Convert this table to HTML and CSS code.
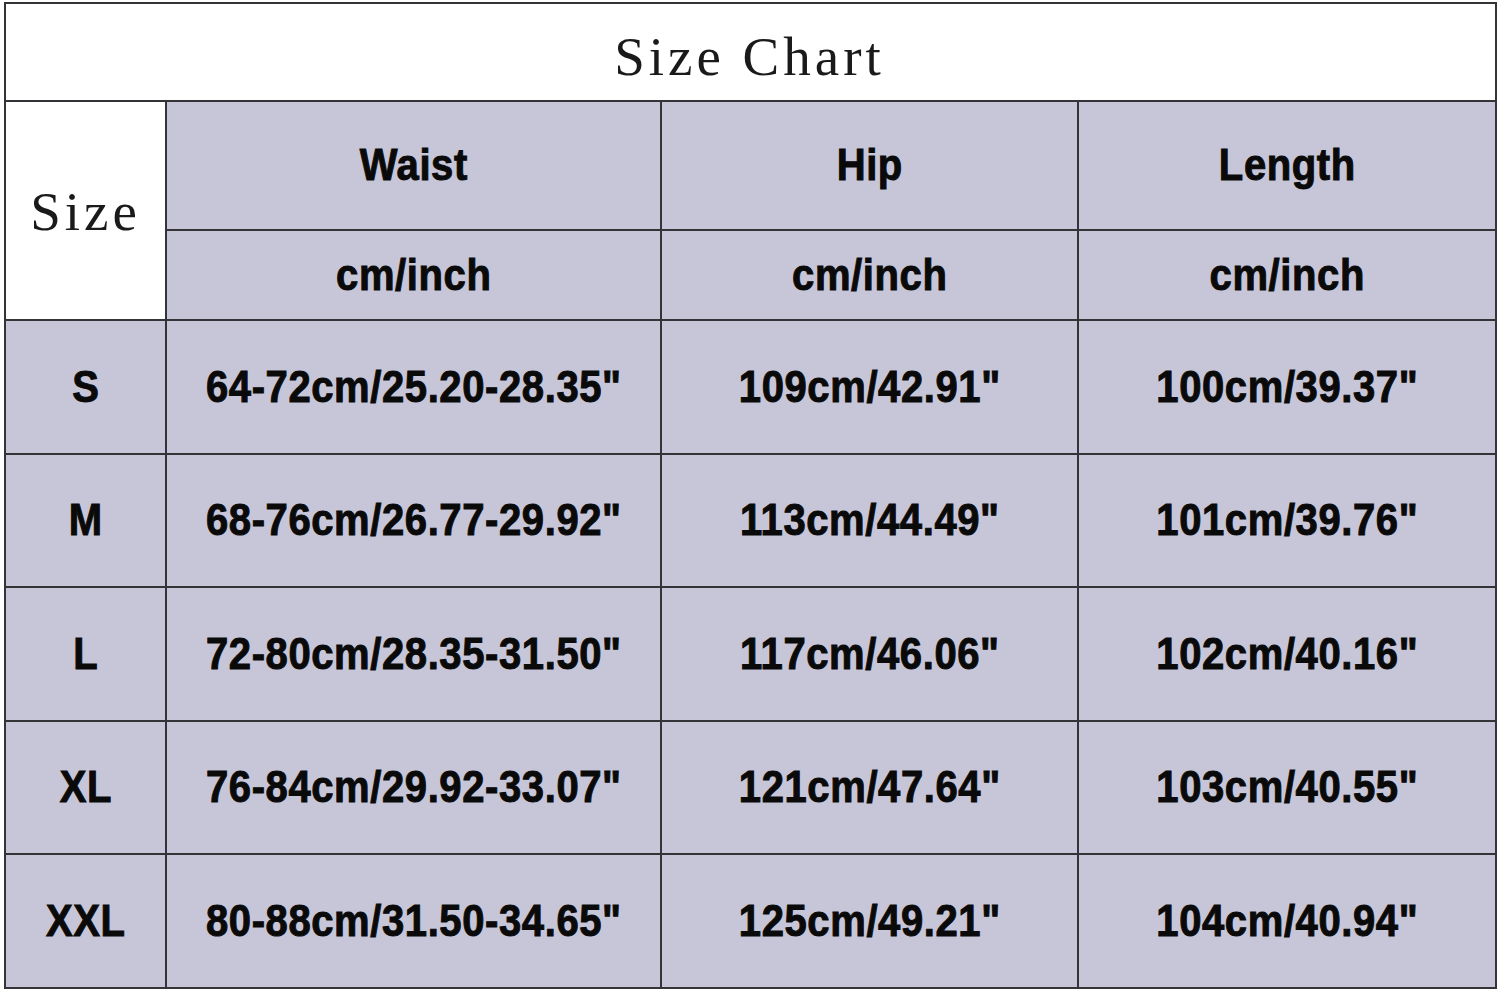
FILE: index.html
```html
<!DOCTYPE html>
<html>
<head>
<meta charset="utf-8">
<link rel="stylesheet" href="styles.css">
</head>
<body>
<div class="chart">
  <div class="cell title span4"><span class="serif">Size Chart</span></div>
  <div class="cell sizehead"><span class="serif">Size</span></div>
  <div class="cell lav"><span class="b">Waist</span></div>
  <div class="cell lav"><span class="b">Hip</span></div>
  <div class="cell lav"><span class="b">Length</span></div>
  <div class="cell lav"><span class="b">cm/inch</span></div>
  <div class="cell lav"><span class="b">cm/inch</span></div>
  <div class="cell lav"><span class="b">cm/inch</span></div>

  <div class="cell lav"><span class="b">S</span></div>
  <div class="cell lav"><span class="b">64-72cm/25.20-28.35"</span></div>
  <div class="cell lav"><span class="b">109cm/42.91"</span></div>
  <div class="cell lav"><span class="b">100cm/39.37"</span></div>

  <div class="cell lav"><span class="b">M</span></div>
  <div class="cell lav"><span class="b">68-76cm/26.77-29.92"</span></div>
  <div class="cell lav"><span class="b">113cm/44.49"</span></div>
  <div class="cell lav"><span class="b">101cm/39.76"</span></div>

  <div class="cell lav"><span class="b">L</span></div>
  <div class="cell lav"><span class="b">72-80cm/28.35-31.50"</span></div>
  <div class="cell lav"><span class="b">117cm/46.06"</span></div>
  <div class="cell lav"><span class="b">102cm/40.16"</span></div>

  <div class="cell lav"><span class="b">XL</span></div>
  <div class="cell lav"><span class="b">76-84cm/29.92-33.07"</span></div>
  <div class="cell lav"><span class="b">121cm/47.64"</span></div>
  <div class="cell lav"><span class="b">103cm/40.55"</span></div>

  <div class="cell lav"><span class="b">XXL</span></div>
  <div class="cell lav"><span class="b">80-88cm/31.50-34.65"</span></div>
  <div class="cell lav"><span class="b">125cm/49.21"</span></div>
  <div class="cell lav"><span class="b">104cm/40.94"</span></div>
</div>
</body>
</html>
```
FILE: styles.css
```css
html, body {
  margin: 0;
  padding: 0;
  background: #ffffff;
}
body {
  padding: 2px 0 0 4px;
}
.chart {
  display: grid;
  width: 1493px;
  box-sizing: border-box;
  padding: 2px;
  gap: 2px;
  background: #333338;
  grid-template-columns: 159px 493px 415px 416px;
  grid-template-rows: 96px 127px 88px 132px 131px 132px 131px 132px;
}
.cell {
  display: flex;
  align-items: center;
  justify-content: center;
  background: #c7c6d9;
}
.title, .sizehead {
  background: #ffffff;
}
.span4 {
  grid-column: 1 / 5;
}
.sizehead {
  grid-row: 2 / 4;
}
.serif {
  font-family: "Liberation Serif", "Times New Roman", serif;
  font-size: 55px;
  letter-spacing: 4px;
  color: #1a1a1a;
  margin-right: -4px;
}
.title .serif {
  padding-top: 8px;
  padding-right: 6px;
}
.sizehead .serif {
  padding-top: 2px;
  padding-right: 4px;
}
.b {
  font-family: "Liberation Sans", Arial, sans-serif;
  font-weight: bold;
  font-size: 40px;
  letter-spacing: 0.6px;
  color: #0a0a0a;
  -webkit-text-stroke: 0.9px #0a0a0a;
  display: inline-block;
  transform: scaleY(1.1);
  margin-right: -0.6px;
}
```
